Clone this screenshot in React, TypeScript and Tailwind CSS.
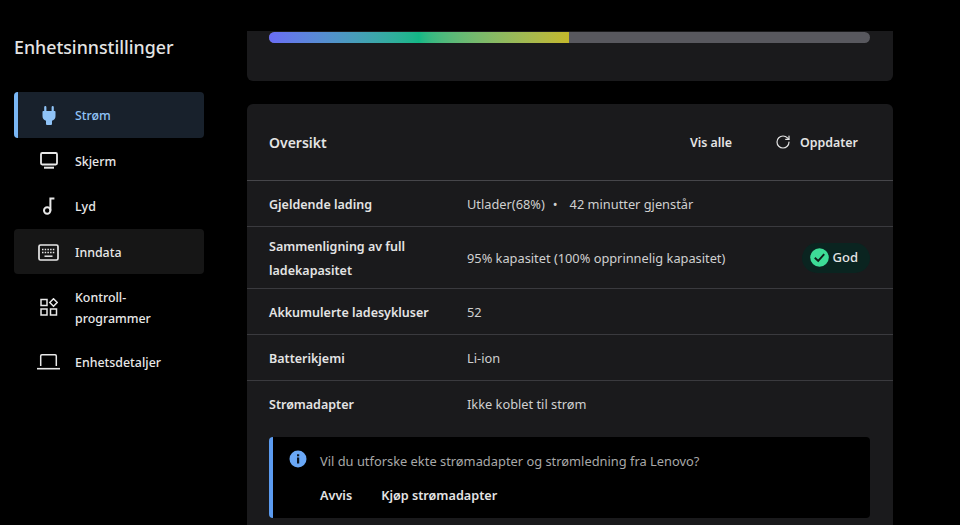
// Enhetsinnstillinger: power page, scrolled so the overview card is in view.
import type { ReactNode } from 'react'
import { RotateCw } from 'lucide-react'

function PlugIcon() {
  return (
    <svg width="14" height="19" viewBox="0 0 14 19" fill="currentColor">
      <path d="M2.200 1.200a1.100 1.100 0 0 1 2.200 0V5h5.200V1.200a1.100 1.100 0 0 1 2.200 0V5h.9a.8.8 0 0 1 .8.8V10a5 5 0 0 1-3.500 4.800V18a1 1 0 0 1-1 1H5a1 1 0 0 1-1-1v-3.200A5 5 0 0 1 .5 10V5.800a.8.8 0 0 1 .8-.8h.9z" />
    </svg>
  )
}

function MonitorIcon() {
  return (
    <svg width="18" height="17" viewBox="0 0 18 17" fill="none" stroke="currentColor" strokeWidth="1.800">
      <rect x="1" y="1" width="16" height="11.500" rx="1.200" />
      <path d="M4 15.700h10" strokeWidth="2" />
    </svg>
  )
}

function NoteIcon() {
  return (
    <svg width="12" height="18" viewBox="0 0 12 18" fill="none" stroke="currentColor" strokeWidth="2">
      <circle cx="4.200" cy="13.500" r="3.200" />
      <path d="M7.400 13.500V1.500h4" />
    </svg>
  )
}

function KeyboardIcon() {
  return (
    <svg width="21" height="17" viewBox="0 0 21 17" fill="none" stroke="currentColor">
      <rect x="1" y="1" width="19" height="15" rx="1.500" strokeWidth="1.700" />
      <path d="M4 5.500h13M4 8.500h13" strokeWidth="1.500" strokeDasharray="1.500 1.200" />
      <path d="M6.500 12.200h8" strokeWidth="1.500" />
    </svg>
  )
}

function AppsIcon() {
  return (
    <svg width="18" height="18" viewBox="0 0 18 18" fill="none" stroke="currentColor" strokeWidth="1.500">
      <rect x="1" y="1.500" width="6" height="6" />
      <rect x="1" y="11" width="6" height="6" />
      <rect x="10.500" y="11" width="6" height="6" />
      <path d="M13.500 .8 17.200 4.500 13.500 8.200 9.800 4.500z" />
    </svg>
  )
}

function LaptopIcon() {
  return (
    <svg width="23" height="16" viewBox="0 0 23 16" fill="none" stroke="currentColor" strokeWidth="1.500">
      <path d="M3.700 12V2a1.200 1.200 0 0 1 1.200-1.200h13.200A1.200 1.200 0 0 1 19.300 2v10" />
      <path d="M0 14.700h23" strokeWidth="1.600" />
    </svg>
  )
}

const navItems: Array<{ label: ReactNode; icon: ReactNode; tall?: boolean; state?: 'active' | 'hover' }> = [
  { label: 'Strøm', icon: <PlugIcon />, state: 'active' },
  { label: 'Skjerm', icon: <MonitorIcon /> },
  { label: 'Lyd', icon: <NoteIcon /> },
  { label: 'Inndata', icon: <KeyboardIcon />, state: 'hover' },
  { label: <>Kontroll-<br />programmer</>, icon: <AppsIcon />, tall: true },
  { label: 'Enhetsdetaljer', icon: <LaptopIcon /> },
]

function NavItem({ label, icon, tall, state }: (typeof navItems)[number]) {
  return (
    <div
      className={`relative flex items-center rounded-[4px] text-[12.4px] font-medium ${tall ? 'h-[64.8px] leading-[21px]' : 'h-[45.6px]'} ${
        state === 'active' ? 'bg-[#18212c] text-[#8fc3f7]' : state === 'hover' ? 'bg-[#161616] text-[#e8e8e8]' : 'text-[#e8e8e8]'
      }`}
    >
      {state === 'active' && <div className="absolute left-0 top-0 h-full w-[4px] rounded-l-[4px] bg-[#7ab7f5]" />}
      <div className="flex w-[61px] shrink-0 justify-center pl-[8px] pt-px">{icon}</div>
      <div className={tall ? 'pt-[2px]' : 'pt-[3px]'}>{label}</div>
    </div>
  )
}

const rows: Array<{ label: ReactNode; value: ReactNode; tall?: boolean; badge?: boolean }> = [
  {
    label: 'Gjeldende lading',
    value: (
      <>
        Utlader(68%)<span className="ml-[8px] mr-[12px]">•</span>42 minutter gjenstår
      </>
    ),
  },
  {
    label: <>Sammenligning av full<br />ladekapasitet</>,
    value: '95% kapasitet (100% opprinnelig kapasitet)',
    tall: true,
    badge: true,
  },
  { label: 'Akkumulerte ladesykluser', value: '52' },
  { label: 'Batterikjemi', value: 'Li-ion' },
  { label: 'Strømadapter', value: 'Ikke koblet til strøm' },
]

function GoodBadge() {
  return (
    <div className="flex h-[30px] items-center gap-[4px] rounded-full bg-[#0a2420] pl-[8px] pr-[12px] text-[13px] font-medium text-[#e6e6e6]">
      <svg width="19" height="19" viewBox="0 0 19 19">
        <circle cx="9.500" cy="9.500" r="9.300" fill="#3ddc97" />
        <path d="M4.800 9.800 8.200 13l6-6.800" fill="none" stroke="#0f1f1a" strokeWidth="1.900" />
      </svg>
      God
    </div>
  )
}

export default function App() {
  return (
    <div className="flex h-[525px] w-[960px] overflow-hidden bg-black font-['Noto_Sans','Open_Sans',sans-serif] text-[#e6e6e6]">
      <aside className="w-[247px] shrink-0 pl-[14px] pr-[43px] pt-[35px]">
        <h1 className="h-[57px] text-[17.8px] font-medium leading-[25px] text-[#e4e4e4]">Enhetsinnstillinger</h1>
        {navItems.map((item, i) => (
          <NavItem key={i} {...item} />
        ))}
      </aside>

      <main className="w-[646px] shrink-0 pt-[31px]">
        <section className="h-[50px] rounded-b-[6px] bg-[#1a1a1c] pl-[22px] pr-[23px] pt-px">
          <div className="flex h-[11px] overflow-hidden rounded-full bg-[#58585e]">
            <div className="h-full w-[300px] bg-gradient-to-r from-[#6a6cf5] via-[#12b886] to-[#c4b82a]" />
          </div>
        </section>

        <section className="mt-[23px] rounded-t-[6px] bg-[#1a1a1c] pb-[8px]">
          <header className="flex h-[77px] items-center justify-between border-b border-[#46464a] pl-[22px] pr-[35px]">
            <h2 className="text-[14px] font-semibold text-[#e4e4e4]">Oversikt</h2>
            <div className="flex items-center text-[12.4px] font-semibold text-[#e4e4e4]">
              <span className="pt-[3px]">Vis alle</span>
              <RotateCw size={16} strokeWidth={1.8} className="ml-[43px] mr-[9px]" />
              <span className="pt-[3px]">Oppdater</span>
            </div>
          </header>

          {rows.map((row, i) => {
            const last = i === rows.length - 1
            return (
              <div
                key={i}
                className={`flex items-center pl-[22px] pr-[23px] ${last ? '' : 'border-b border-[#3a3a3e]'} ${row.tall ? 'h-[62px]' : 'h-[46px]'}`}
              >
                <div className="w-[198px] shrink-0 pt-[2px] text-[12.5px] font-semibold leading-[24px] text-[#e4e4e4]">{row.label}</div>
                <div className={`flex-1 text-[12.8px] text-[#d0d0d0] ${last ? 'pt-px' : 'pt-[3px]'}`}>{row.value}</div>
                {row.badge && <GoodBadge />}
              </div>
            )
          })}

          <div className="ml-[22px] mr-[23px] mt-[10px] h-[81px] rounded-[4px] border-l-[4px] border-[#5b9bf0] bg-black pl-[16px] pt-[14px]">
            <div className="flex items-start gap-[13px] text-[12.86px] text-[#a8a8a8]">
              <svg width="18" height="18" viewBox="0 0 18 18" className="-mt-px">
                <circle cx="9" cy="9" r="8.500" fill="#6aa8f7" />
                <rect x="8" y="7.500" width="2.200" height="6" fill="#0b1420" />
                <rect x="8" y="4.300" width="2.200" height="2" fill="#0b1420" />
              </svg>
              <span className="pt-[1px]">Vil du utforske ekte strømadapter og strømledning fra Lenovo?</span>
            </div>
            <div className="mt-[15px] flex gap-[29px] pl-[31px] text-[12.67px] font-semibold text-[#e4e4e4]">
              <span>Avvis</span>
              <span>Kjøp strømadapter</span>
            </div>
          </div>
        </section>
      </main>
    </div>
  )
}
